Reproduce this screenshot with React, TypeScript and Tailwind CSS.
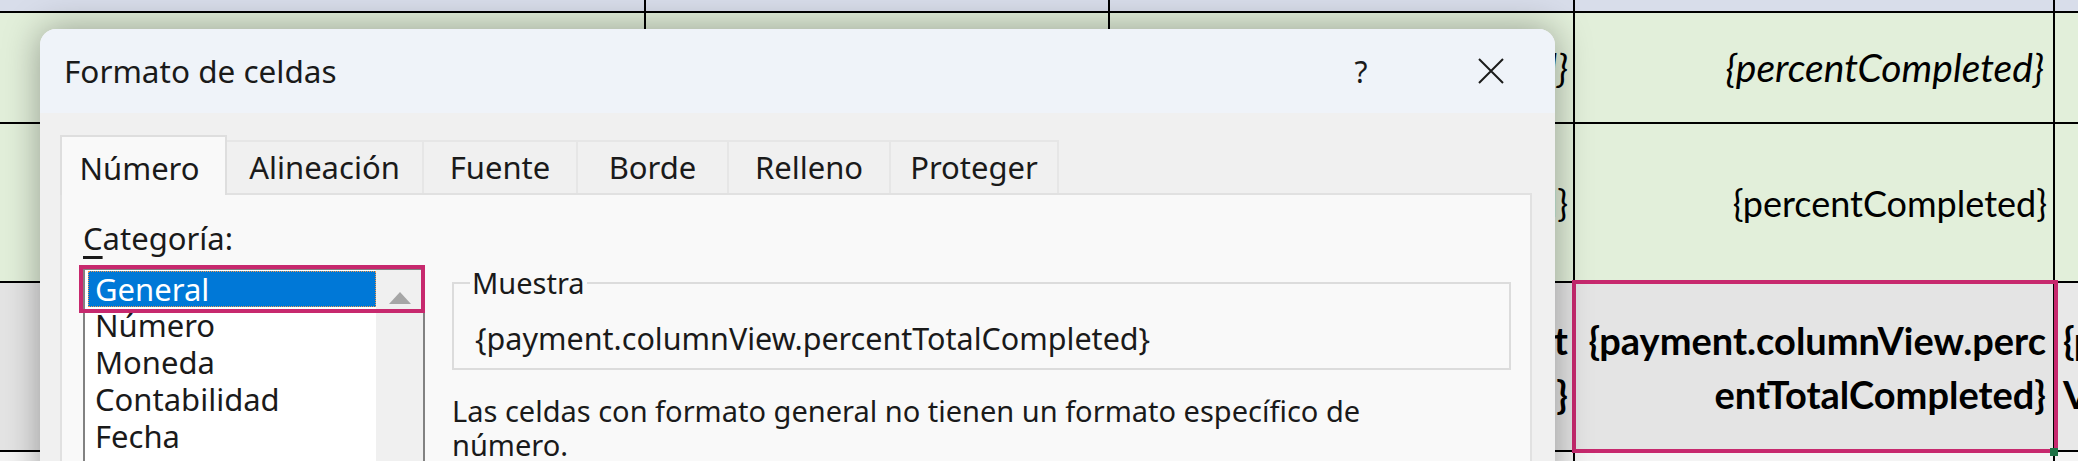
import React from "react";

const tabs = [
  { label: "Alineación", w: "w-[197px]" },
  { label: "Fuente", w: "w-[154px]" },
  { label: "Borde", w: "w-[151px]" },
  { label: "Relleno", w: "w-[162px]" },
  { label: "Proteger", w: "w-[168px]" },
];

const categories = ["Número", "Moneda", "Contabilidad", "Fecha", "Hora"];

function Sheet() {
  return (
    <div className="grid h-full grid-cols-[644px_462px_463px_478px_1fr] grid-rows-[11px_109px_157px_167px_1fr] gap-[2px] bg-black font-['Lato',sans-serif] text-[36px] text-black">
      {/* header strip */}
      <div className="bg-[#d8ddea]" />
      <div className="bg-[#d8ddea]" />
      <div className="bg-[#d8ddea]" />
      <div className="bg-[#d8ddea]" />
      <div className="bg-[#d8ddea]" />

      {/* row 1 */}
      <div className="bg-[#e2efda]" />
      <div className="bg-[#e2efda]" />
      <div className="flex items-center justify-end overflow-hidden bg-[#e2efda] pr-[5px] text-[39px] italic">
        {"{percentCompleted}"}
      </div>
      <div className="flex items-center justify-end overflow-hidden bg-[#e2efda] pr-[9px] text-[39px] italic">
        {"{percentCompleted}"}
      </div>
      <div className="bg-[#e2efda]" />

      {/* row 2 */}
      <div className="bg-[#e2efda]" />
      <div className="bg-[#e2efda]" />
      <div className="flex items-center justify-end overflow-hidden bg-[#e2efda] pr-[5px]">
        {"{percentCompleted}"}
      </div>
      <div className="flex items-center justify-end overflow-hidden bg-[#e2efda] pr-[6px]">
        {"{percentCompleted}"}
      </div>
      <div className="bg-[#e2efda]" />

      {/* row 3 */}
      <div className="bg-[#e4e4e4]" />
      <div className="bg-[#e4e4e4]" />
      <div className="flex flex-col items-end justify-center overflow-hidden bg-[#e4e4e4] pr-[5px] text-[38px] font-bold leading-[54px]">
        <span>{"{payment.rowView.amount"}</span>
        <span>{"Completed}"}</span>
      </div>
      <div className="relative flex flex-col items-end justify-center bg-[#e4e4e4] pr-[7px] text-[38px] font-bold leading-[54px]">
        <span className="whitespace-nowrap">{"{payment.columnView.perc"}</span>
        <span className="whitespace-nowrap">{"entTotalCompleted}"}</span>
        <div className="pointer-events-none absolute -bottom-[3px] -left-[3px] -right-[5px] -top-[3px] border-4 border-[#c7296e]" />
        <div className="absolute -bottom-[6px] -right-[5px] h-[8px] w-[8px] bg-[#1e7145]" />
      </div>
      <div className="flex flex-col justify-center overflow-hidden whitespace-nowrap bg-[#e8e8e8] pl-[8px] text-[38px] font-bold leading-[54px]">
        <span>{"{payment"}</span>
        <span>{"View}"}</span>
      </div>

      {/* row 4 */}
      <div className="bg-[#f4f4f4]" />
      <div className="bg-[#f4f4f4]" />
      <div className="bg-[#f4f4f4]" />
      <div className="bg-[#f4f4f4]" />
      <div className="bg-[#f4f4f4]" />
    </div>
  );
}

function FormatDialog() {
  return (
    <div className="absolute left-[40px] top-[29px] h-[470px] w-[1515px] overflow-hidden rounded-t-[16px] bg-[#f0f0f0] font-['Noto_Sans',sans-serif] text-[31px] text-[#1a1a1a] shadow-[0_0_36px_rgba(0,0,0,0.35)]">
      {/* title bar */}
      <div className="flex h-[84px] items-center bg-[#eff3f9] pl-[24px]">
        <span className="text-[31.5px]">Formato de celdas</span>
        <button className="ml-auto flex h-[60px] w-[60px] items-center justify-center text-[30px]">?</button>
        <button className="ml-[68px] mr-[32px] flex h-[60px] w-[64px] items-center justify-center">
          <svg width="28" height="28" viewBox="0 0 28 28">
            <path d="M2 2 L26 26 M26 2 L2 26" stroke="#1b1b1b" strokeWidth="2" fill="none" />
          </svg>
        </button>
      </div>

      <div className="pl-[20px] pr-[23px] pt-[22px]">
        {/* tabs */}
        <div className="flex h-[58px] items-end">
          <div className="relative z-10 -mb-[2px] flex h-[60px] w-[167px] items-center justify-center border-2 border-b-0 border-[#dedede] bg-[#f9f9f9] pt-[4px] pr-[8px]">
            Número
          </div>
          {tabs.map((t) => (
            <div
              key={t.label}
              className={`flex h-[53px] items-center justify-center border-r-2 border-t-2 border-[#e6e6e6] bg-[#f0f0f0] ${t.w}`}
            >
              {t.label}
            </div>
          ))}
        </div>

        {/* panel */}
        <div className="flex h-[320px] border-2 border-[#e1e1e1] bg-[#f9f9f9] pl-[21px] pt-[25px]">
          <div className="w-[342px]">
            <div className="h-[36px] leading-[36px]">
              <span className="underline underline-offset-[6px]">C</span>ategoría:
            </div>
            <div className="relative mt-[12px] flex h-[240px] border-2 border-[#828282] bg-white">
              <div className="flex-1 pl-[3px] pt-[1px]">
                <div className="flex h-[36px] items-center border border-dotted border-[#f39a4d] bg-[#0078d7] pl-[6px] text-white">
                  General
                </div>
                {categories.map((c) => (
                  <div key={c} className="flex h-[37px] items-center pl-[7px]">
                    {c}
                  </div>
                ))}
              </div>
              <div className="flex w-[47px] justify-center bg-[#f0f0f0] pt-[22px]">
                <svg width="22" height="12" viewBox="0 0 22 12">
                  <polygon points="11,0 22,12 0,12" fill="#a6a6a6" />
                </svg>
              </div>
              <div className="pointer-events-none absolute -left-[6px] -top-[5px] h-[48px] w-[346px] border-4 border-[#c7296e]" />
            </div>
          </div>

          <div className="ml-[27px] mt-[45px] w-[1059px] text-[29px]">
            <fieldset className="border-2 border-[#dcdcdc] px-[21px] pb-[12px] pt-[19px]">
              <legend className="ml-[-5px] px-[2px] leading-[36px]">Muestra</legend>
              <div className="text-[30.5px] leading-[36px]">{"{payment.columnView.percentTotalCompleted}"}</div>
            </fieldset>
            <p className="mt-[24px] leading-[34px]">
              Las celdas con formato general no tienen un formato específico de
              <br />
              número.
            </p>
          </div>
        </div>
      </div>
    </div>
  );
}

export default function App() {
  return (
    <div className="relative h-[461px] w-[2078px] overflow-hidden bg-[#f4f4f4]">
      <Sheet />
      <FormatDialog />
    </div>
  );
}
